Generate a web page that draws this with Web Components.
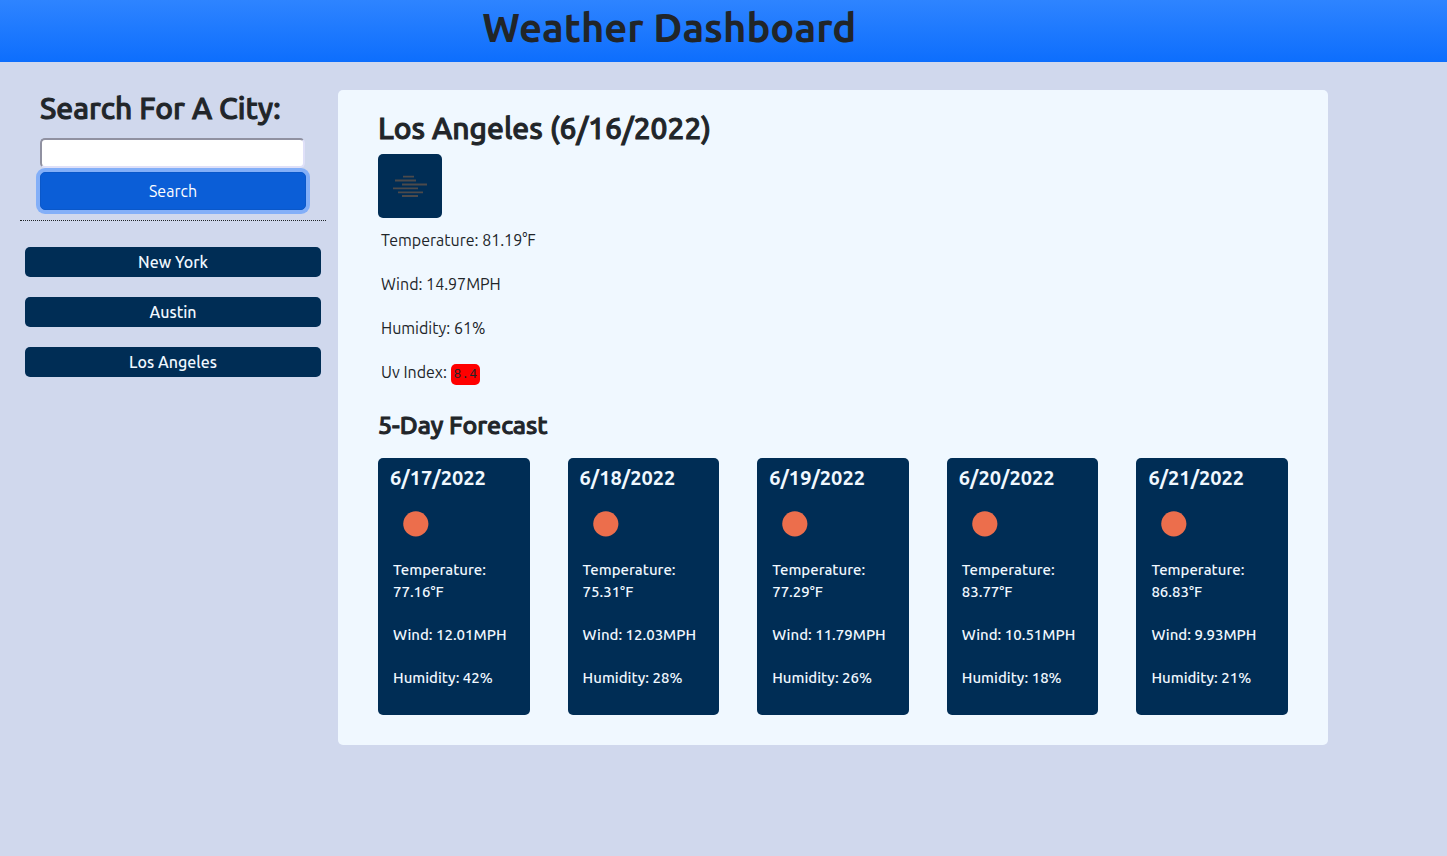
<!DOCTYPE html>
<html lang="en">
<head>
<meta charset="utf-8">
<meta name="viewport" content="width=device-width, initial-scale=1">
<title>Weather Dashboard</title>
<style>
  body {
    margin: 0;
    background: #d0d8ed;
    color: #212529;
    font: 400 16px/24px Ubuntu, "Noto Sans", sans-serif;
  }
</style>
</head>
<body>
<weather-app></weather-app>

<template id="app-header">
  <style>
    :host { display: block; background: linear-gradient(#2e84ff, #0d6efd); padding: 4px 0 10px 33.3333%; }
    h1 { margin: 0; font-size: 40px; line-height: 48px; font-weight: 700; }
  </style>
  <h1><slot></slot></h1>
</template>

<template id="city-search">
  <style>
    :host { display: block; padding: 0 20px 10px; border-bottom: 1px dotted #212529; }
    form { display: flex; flex-direction: column; margin: 0; }
    label { font-size: 30px; line-height: 36px; font-weight: 500; margin-bottom: 12px; -webkit-text-stroke: 1px; white-space: nowrap; }
    input {
      box-sizing: border-box; height: 30px; margin: 0 1px 4px 0; padding: 1px 2px; font: inherit;
      background: #fff; border: 2px solid; border-color: #9091a1 #dfe0f8 #dfe0f8 #9091a1; border-radius: 5px; outline: 0;
    }
    button {
      height: 38px; padding: 0; font: inherit; color: #fff; background: #0b5ed7;
      border: 1px solid #0a58ca; border-radius: 5px; box-shadow: 0 0 0 4px #83aff8; cursor: pointer;
    }
  </style>
  <form onsubmit="return false">
    <label for="city">Search For A City:</label>
    <input id="city" type="text" autocomplete="off">
    <button type="submit">Search</button>
  </form>
</template>

<template id="city-history">
  <style>
    :host { display: flex; flex-direction: column; gap: 20px; padding: 26px 5px; }
    button {
      height: 30px; padding: 0; border: 0; border-radius: 5px; background: #002d55;
      color: #f0f8ff; font: inherit; font-weight: 500; cursor: pointer;
    }
  </style>
</template>

<template id="current-weather">
  <style>
    :host { display: block; }
    h2 { margin: 0 0 8px; font-size: 30px; line-height: 36px; font-weight: 500; -webkit-text-stroke: 1px; }
    svg { display: block; width: 64px; height: 64px; border-radius: 5px; background: #002d55; }
    .stats { display: flex; flex-direction: column; gap: 20px; padding: 10px 3px 0; }
    p { margin: 0; }
    .uv {
      display: inline-block; padding: 0 3px; border-radius: 5px; background: #f00;
      font: 13px/21px "Liberation Mono", monospace;
    }
  </style>
  <h2><slot name="title"></slot></h2>
  <svg viewBox="0 0 64 64" role="img" aria-label="Mist" stroke="#4c4a4b" stroke-width="1.8">
    <path d="M25 22.7H36M17 26.5H38M24 30.5H49M15 34.3H40M20 38.3H45M24 42H40"/>
  </svg>
  <div class="stats">
    <p>Temperature: <slot name="temp"></slot></p>
    <p>Wind: <slot name="wind"></slot></p>
    <p>Humidity: <slot name="humidity"></slot></p>
    <p>Uv Index: <span class="uv"><slot name="uv"></slot></span></p>
  </div>
</template>

<template id="forecast-card">
  <style>
    :host { display: block; padding: 8px 12px 26px; border-radius: 5px; background: #002d55; color: #f0f8ff; font-weight: 500; }
    h4 { margin: 0 0 8px; font-size: 20px; line-height: 24px; font-weight: 700; }
    svg { display: block; width: 52px; height: 52px; }
    .stats { display: flex; flex-direction: column; gap: 21px; padding: 9px 3px 0; font-size: 15px; line-height: 22px; }
    p { margin: 0; }
  </style>
  <h4></h4>
  <svg viewBox="0 0 52 52" role="img" aria-label="Clear sky"><circle cx="25.8" cy="25.8" r="12.6" fill="#ec6e4c"/></svg>
  <div class="stats">
    <p class="temp"></p>
    <p class="wind"></p>
    <p class="humidity"></p>
  </div>
</template>

<template id="weather-app">
  <style>
    :host { display: block; }
    main { display: flex; align-items: flex-start; gap: 12px; padding: 28px 119px 28px 20px; }
    aside { flex: 0 0 306px; }
    section { flex: 1; min-width: 0; padding: 20px 40px 30px; border-radius: 5px; background: #f0f8ff; }
    h3 { margin: 24px 0 17px; font-size: 25px; line-height: 32px; font-weight: 500; -webkit-text-stroke: 1px; }
    .days { display: grid; grid-template-columns: repeat(5, minmax(0, 1fr)); gap: 38px; }
    @media (max-width: 1200px) {
      main { padding-right: 20px; }
      .days { grid-template-columns: repeat(auto-fill, minmax(150px, 1fr)); }
    }
    @media (max-width: 760px) {
      main { flex-direction: column; align-items: stretch; }
      aside { flex-basis: auto; }
    }
  </style>
  <app-header>Weather Dashboard</app-header>
  <main>
    <aside>
      <city-search></city-search>
      <city-history cities="New York,Austin,Los Angeles"></city-history>
    </aside>
    <section>
      <current-weather>
        <span slot="title">Los Angeles (6/16/2022)</span>
        <span slot="temp">81.19°F</span>
        <span slot="wind">14.97MPH</span>
        <span slot="humidity">61%</span>
        <span slot="uv">8.4</span>
      </current-weather>
      <h3>5-Day Forecast</h3>
      <div class="days">
        <forecast-card date="6/17/2022" temp="77.16" wind="12.01" humidity="42"></forecast-card>
        <forecast-card date="6/18/2022" temp="75.31" wind="12.03" humidity="28"></forecast-card>
        <forecast-card date="6/19/2022" temp="77.29" wind="11.79" humidity="26"></forecast-card>
        <forecast-card date="6/20/2022" temp="83.77" wind="10.51" humidity="18"></forecast-card>
        <forecast-card date="6/21/2022" temp="86.83" wind="9.93" humidity="21"></forecast-card>
      </div>
    </section>
  </main>
</template>

<script>
  class TemplateElement extends HTMLElement {
    connectedCallback() {
      if (this.shadowRoot) return;
      const root = this.attachShadow({ mode: 'open' });
      root.append(document.getElementById(this.localName).content.cloneNode(true));
      this.render(root);
    }
    render() {}
  }

  class AppHeader extends TemplateElement {}
  class CitySearch extends TemplateElement {}
  class CurrentWeather extends TemplateElement {}
  class WeatherApp extends TemplateElement {}

  class CityHistory extends TemplateElement {
    render(root) {
      for (const city of this.getAttribute('cities').split(',')) {
        const button = document.createElement('button');
        button.type = 'button';
        button.textContent = city;
        root.append(button);
      }
    }
  }

  class ForecastCard extends TemplateElement {
    render(root) {
      const value = name => this.getAttribute(name);
      root.querySelector('h4').textContent = value('date');
      root.querySelector('.temp').textContent = `Temperature: ${value('temp')}°F`;
      root.querySelector('.wind').textContent = `Wind: ${value('wind')}MPH`;
      root.querySelector('.humidity').textContent = `Humidity: ${value('humidity')}%`;
    }
  }

  customElements.define('app-header', AppHeader);
  customElements.define('city-search', CitySearch);
  customElements.define('city-history', CityHistory);
  customElements.define('current-weather', CurrentWeather);
  customElements.define('forecast-card', ForecastCard);
  customElements.define('weather-app', WeatherApp);
</script>
</body>
</html>
